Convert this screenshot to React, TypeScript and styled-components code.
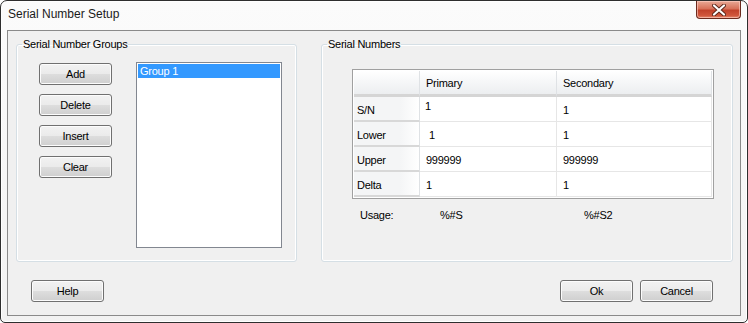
import styled, { createGlobalStyle } from 'styled-components';

const GlobalStyle = createGlobalStyle`
  html, body {
    margin: 0;
    padding: 0;
    background: #ffffff;
  }
  body {
    font-family: "Liberation Sans", Arial, sans-serif;
    font-size: 11px;
    letter-spacing: -0.25px;
    color: #000;
  }
`

interface GridRow {
  label: string,
  primary: string,
  secondary: string,
  primaryShift?: 'raised' | 'indent',
}

const rows: GridRow[] = [
  { label: 'S/N', primary: '1', secondary: '1', primaryShift: 'raised' },
  { label: 'Lower', primary: '1', secondary: '1', primaryShift: 'indent' },
  { label: 'Upper', primary: '999999', secondary: '999999' },
  { label: 'Delta', primary: '1', secondary: '1' },
];

const sideButtons = ['Add', 'Delete', 'Insert', 'Clear'];

const CloseGlyph = () => (
  <svg width="14" height="12" viewBox="0 0 14 12">
    <path d="M2 1.5 L12 10.5 M12 1.5 L2 10.5" stroke="#5a2418" strokeWidth="4" strokeLinecap="round" />
    <path d="M2 1.5 L12 10.5 M12 1.5 L2 10.5" stroke="#ffffff" strokeWidth="2.2" strokeLinecap="round" />
  </svg>
)

const App = () => {
  return (
    <>
      <GlobalStyle />
      <Window>
        <TitleBar>
          <Title>Serial Number Setup</Title>
          <CloseButton aria-label="Close"><CloseGlyph /></CloseButton>
        </TitleBar>
        <Client>
          <TopRow>
            <GroupsBox>
              <Legend>Serial Number Groups</Legend>
              <GroupsBody>
                <ButtonColumn>
                  {sideButtons.map((b) => <Button key={b}>{b}</Button>)}
                </ButtonColumn>
                <ListBox>
                  <ListItem $selected>Group 1</ListItem>
                </ListBox>
              </GroupsBody>
            </GroupsBox>
            <NumbersBox>
              <Legend>Serial Numbers</Legend>
              <NumbersBody>
                <Grid>
                  <HeaderRow>
                    <CornerCell />
                    <ColHeader $width={137}>Primary</ColHeader>
                    <ColHeader $width={155}>Secondary</ColHeader>
                    <Filler />
                  </HeaderRow>
                  {rows.map((r) => (
                    <DataRow key={r.label}>
                      <RowHeader>{r.label}</RowHeader>
                      <Cell $width={137} $shift={r.primaryShift}>{r.primary}</Cell>
                      <Cell $width={155}>{r.secondary}</Cell>
                      <Filler />
                    </DataRow>
                  ))}
                </Grid>
                <UsageRow>
                  <UsageLabel>Usage:</UsageLabel>
                  <UsageCode $width={144}>%#S</UsageCode>
                  <UsageCode $width={60}>%#S2</UsageCode>
                </UsageRow>
              </NumbersBody>
            </NumbersBox>
          </TopRow>
          <BottomRow>
            <Button>Help</Button>
            <RightButtons>
              <Button>Ok</Button>
              <Button>Cancel</Button>
            </RightButtons>
          </BottomRow>
        </Client>
      </Window>
    </>
  )
}

const Window = styled.div`
  width: 748px;
  height: 323px;
  box-sizing: border-box;
  border: 1px solid #2e2e2e;
  border-radius: 7px 7px 5px 5px;
  background: linear-gradient(to bottom, #fbfbfb 0%, #f2f2f2 100%);
  display: flex;
  flex-direction: column;
  padding: 0 6px 6px 6px;
  box-shadow: inset 0 0 0 1px #ffffff;
`

const TitleBar = styled.div`
  height: 29px;
  display: flex;
  align-items: flex-start;
  justify-content: space-between;
`

const Title = styled.div`
  font-size: 12px;
  letter-spacing: 0;
  color: #1a1a1a;
  padding: 6px 0 0 1px;
`

const CloseButton = styled.div`
  width: 45px;
  height: 18px;
  box-sizing: border-box;
  border: 1px solid #6b2a1e;
  border-top: none;
  border-radius: 0 0 4px 4px;
  background: linear-gradient(to bottom, #e9a996 0%, #d7725a 45%, #c2422b 55%, #d0563c 85%, #e58a6f 100%);
  box-shadow: inset 0 0 0 1px rgba(255, 210, 200, 0.6);
  display: flex;
  align-items: center;
  justify-content: center;
`

const Client = styled.div`
  flex: 1;
  border: 1px solid #8a8a8a;
  background: #f0f0f0;
  display: flex;
  flex-direction: column;
  padding: 7px 7px 0 8px;
`

const TopRow = styled.div`
  display: flex;
  gap: 24px;
`

const GroupBox = styled.fieldset`
  margin: 0;
  box-sizing: border-box;
  height: 224px;
  border: 1px solid #d5dfe5;
  border-radius: 3px;
  box-shadow: inset 0 0 0 1px #ffffff;
  padding: 0;
  min-width: 0;
`

const GroupsBox = styled(GroupBox)`
  width: 281px;
`

const NumbersBox = styled(GroupBox)`
  width: 412px;
`

const Legend = styled.legend`
  padding: 0 1px;
  margin-left: 5px;
  font-size: 11px;
  line-height: 13px;
  color: #000;
`

const GroupsBody = styled.div`
  display: flex;
  gap: 24px;
  padding: 11px 0 0 22px;
`

const NumbersBody = styled.div`
  padding: 18px 0 0 30px;
`

const ButtonColumn = styled.div`
  display: flex;
  flex-direction: column;
  gap: 9px;
  padding-top: 1px;
`

const Button = styled.div`
  width: 73px;
  height: 22px;
  box-sizing: border-box;
  border: 1px solid #707070;
  border-radius: 3px;
  background: linear-gradient(to bottom, #f2f2f2 0%, #ebebeb 48%, #dddddd 52%, #cfcfcf 100%);
  box-shadow: inset 0 0 0 1px #fcfcfc;
  display: flex;
  align-items: center;
  justify-content: center;
  font-size: 11px;
  color: #000;
`

const ListBox = styled.div`
  width: 146px;
  height: 186px;
  box-sizing: border-box;
  border: 1px solid #828790;
  background: #ffffff;
  padding: 1px;
`

const ListItem = styled.div<{ $selected?: boolean }>`
  height: 14px;
  line-height: 14px;
  padding-left: 2px;
  font-size: 11px;
  background: ${(p) => (p.$selected ? '#3399ff' : 'transparent')};
  color: ${(p) => (p.$selected ? '#ffffff' : '#000000')};
`

const Grid = styled.div`
  width: 362px;
  box-sizing: border-box;
  border: 1px solid #a0a0a0;
  background: #ffffff;
  padding: 1px;
`

const HeaderRow = styled.div`
  display: flex;
  height: 26px;
`

const DataRow = styled.div`
  display: flex;
  height: 25px;
`

const headerFace = `
  background: linear-gradient(to bottom, #ffffff 0%, #f7f8f9 40%, #eceef0 100%);
  box-sizing: border-box;
`

const CornerCell = styled.div`
  ${headerFace}
  width: 66px;
  border-right: 1px solid #dfe2e5;
  border-bottom: 3px solid #d5d5d5;
`

const ColHeader = styled.div<{ $width: number }>`
  ${headerFace}
  width: ${(p) => p.$width}px;
  border-right: 1px solid #dfe2e5;
  border-bottom: 3px solid #d5d5d5;
  padding: 6px 0 0 6px;
  font-size: 11px;
`

const Filler = styled.div`
  flex: 1;
`

const RowHeader = styled.div`
  width: 66px;
  box-sizing: border-box;
  background: linear-gradient(to right, #f4f5f6 0%, #f4f5f6 70%, #ffffff 100%);
  border-bottom: 2px solid #d8d8d8;
  border-right: 1px solid #dfe2e5;
  padding: 7px 0 0 3px;
  font-size: 11px;
`

const Cell = styled.div<{ $width: number, $shift?: 'raised' | 'indent' }>`
  width: ${(p) => p.$width}px;
  box-sizing: border-box;
  border-right: 1px solid #e6e6e6;
  border-bottom: 1px solid #e6e6e6;
  padding-top: ${(p) => (p.$shift === 'raised' ? 3 : 7)}px;
  padding-left: ${(p) => (p.$shift === 'indent' ? 9 : p.$shift === 'raised' ? 5 : 6)}px;
  font-size: 11px;
`

const UsageRow = styled.div`
  display: flex;
  padding: 10px 0 0 8px;
`

const UsageLabel = styled.div`
  width: 80px;
`

const UsageCode = styled.div<{ $width: number }>`
  width: ${(p) => p.$width}px;
`

const BottomRow = styled.div`
  display: flex;
  justify-content: space-between;
  padding: 18px 20px 0 15px;
`

const RightButtons = styled.div`
  display: flex;
  gap: 7px;
`

export default App
